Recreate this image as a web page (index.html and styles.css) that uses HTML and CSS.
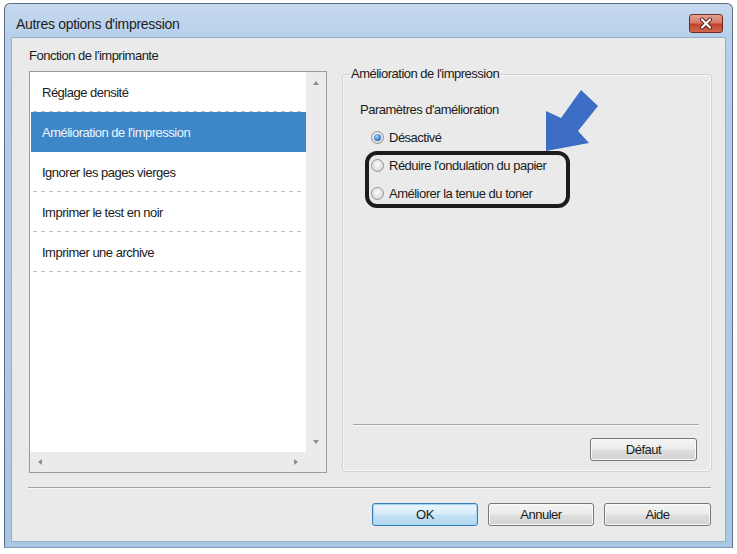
FILE: index.html
```html
<!DOCTYPE html>
<html lang="fr">
<head>
<meta charset="utf-8">
<title>Autres options d'impression</title>
<link rel="stylesheet" href="styles.css">
</head>
<body>
<div class="window">
  <div class="titlebar">
    <span class="title">Autres options d'impression</span>
    <div class="close">
      <svg width="34" height="19" viewBox="0 0 34 19">
        <path d="M13 5.5 L21 13.5 M21 5.5 L13 13.5" stroke="#5a1a12" stroke-width="4" stroke-linecap="round"/>
        <path d="M13 5.5 L21 13.5 M21 5.5 L13 13.5" stroke="#ffffff" stroke-width="2.2" stroke-linecap="round"/>
      </svg>
    </div>
  </div>
  <div class="client">
    <div class="top">
      <div class="leftcol">
        <div class="label">Fonction de l'imprimante</div>
        <div class="listbox">
          <div class="listview">
            <ul class="items">
              <li class="item"><span class="row">Réglage densité</span></li>
              <li class="item selected"><span class="row">Amélioration de l'impression</span></li>
              <li class="item"><span class="row">Ignorer les pages vierges</span></li>
              <li class="item"><span class="row">Imprimer le test en noir</span></li>
              <li class="item"><span class="row">Imprimer une archive</span></li>
            </ul>
          </div>
          <div class="vscroll">
            <span class="tri tri-up"></span>
            <span class="tri tri-down"></span>
          </div>
          <div class="hscroll">
            <span class="tri tri-left"></span>
            <span class="tri tri-right"></span>
          </div>
          <div class="corner"></div>
        </div>
      </div>
      <div class="group">
        <span class="legend">Amélioration de l'impression</span>
        <div class="group-body">
          <div class="sublabel">Paramètres d'amélioration</div>
          <div class="radios">
            <div class="radio-row"><span class="radio on"></span><span>Désactivé</span></div>
            <div class="radio-row"><span class="radio"></span><span>Réduire l'ondulation du papier</span></div>
            <div class="radio-row"><span class="radio"></span><span>Améliorer la tenue du toner</span></div>
          </div>
        </div>
        <div class="group-foot">
          <div class="inner-line"></div>
          <div class="foot-row"><button class="btn btn-defaut">Défaut</button></div>
        </div>
      </div>
    </div>
    <div class="sep"></div>
    <div class="buttons">
      <button class="btn btn-ok">OK</button>
      <button class="btn btn-annuler">Annuler</button>
      <button class="btn btn-aide">Aide</button>
    </div>
  </div>
</div>
<svg class="annot" width="737" height="554" viewBox="0 0 737 554">
  <rect x="367" y="153" width="201" height="53" rx="10" ry="10" fill="none" stroke="#1c1c1c" stroke-width="4"/>
  <polygon points="546,151 546,111 561,118 581,90 598,106 578,131 589,143" fill="#3b6ec4"/>
</svg>
</body>
</html>
```
FILE: styles.css
```css
body {
  margin: 0;
  background: #ffffff;
  font-family: "Liberation Sans", Arial, sans-serif;
  font-size: 13px;
  letter-spacing: -0.5px;
  color: #1b1b1b;
}

.window {
  margin: 3px 4px 0;
  width: 729px;
  height: 545px;
  box-sizing: border-box;
  border: 1px solid #5b6f88;
  border-bottom-color: #7f9ab8;
  border-radius: 6px 6px 0 0;
  background: linear-gradient(#c6daef, #b6cfea 34px, #a9c6e5);
  padding: 0 7px 6px;
  display: flex;
  flex-direction: column;
}

.titlebar {
  height: 34px;
  display: flex;
  align-items: flex-start;
  justify-content: space-between;
}

.title {
  font-size: 14px;
  line-height: 16px;
  letter-spacing: -0.3px;
  margin: 12px 0 0 4px;
  color: #1e1e1e;
}

.close {
  margin: 10px 2px 0 0;
  width: 34px;
  height: 19px;
  box-sizing: border-box;
  border: 1px solid #6e2b22;
  border-radius: 3px;
  background: linear-gradient(#e4a293, #d47a66 45%, #c2432c 55%, #cf6a4f);
  display: flex;
}

.close svg {
  margin: -1px;
}

.client {
  flex: 1;
  background: #eaeaea;
  padding: 10px 13px 15px 17px;
  display: flex;
  flex-direction: column;
  box-shadow: 0 0 0 1px #95b0cd;
}

.top {
  display: flex;
  align-items: flex-start;
  gap: 15px;
}

.leftcol {
  width: 298px;
  display: flex;
  flex-direction: column;
}

.label {
  line-height: 15px;
  margin-bottom: 8px;
}

.listbox {
  height: 402px;
  box-sizing: border-box;
  border: 1px solid #9a9a9a;
  background: #ffffff;
  display: grid;
  grid-template-columns: 1fr 20px;
  grid-template-rows: 1fr 20px;
}

.listview {
  overflow: hidden;
}

.items {
  list-style: none;
  margin: 0;
  padding: 0;
}

.item {
  height: 40px;
  margin-left: 1px;
  padding: 0 2px;
  box-sizing: border-box;
  display: flex;
}

.row {
  flex: 1;
  display: flex;
  align-items: center;
  padding-left: 9px;
  padding-top: 1px;
  background: linear-gradient(to right, #c2c2c2 50%, transparent 50%) left bottom / 8px 1px repeat-x;
}

.item.selected {
  background: #3d87c9;
  color: #eef4fb;
}

.item.selected .row {
  background: none;
}

.vscroll {
  background: #ebebeb;
  display: flex;
  flex-direction: column;
  align-items: center;
  justify-content: space-between;
  padding: 9px 0 8px;
}

.hscroll {
  background: #ebebeb;
  display: flex;
  align-items: center;
  justify-content: space-between;
  padding: 0 8px 0 8px;
}

.corner {
  background: #ebebeb;
}

.tri {
  width: 0;
  height: 0;
  border-style: solid;
  border-color: transparent;
}

.tri-up {
  border-width: 0 3.5px 4px;
  border-bottom-color: #8f8f8f;
}

.tri-down {
  border-width: 4px 3.5px 0;
  border-top-color: #8f8f8f;
}

.tri-left {
  border-width: 3.5px 4px 3.5px 0;
  border-right-color: #8f8f8f;
}

.tri-right {
  border-width: 3.5px 0 3.5px 4px;
  border-left-color: #8f8f8f;
}

.group {
  position: relative;
  margin-top: 26px;
  width: 370px;
  height: 398px;
  box-sizing: border-box;
  border: 1px solid #d3d3d3;
  border-radius: 3px;
  box-shadow: inset 0 0 0 1px #f6f6f6;
  display: flex;
  flex-direction: column;
}

.legend {
  position: absolute;
  top: -9px;
  left: 7px;
  line-height: 15px;
  padding: 0 2px 0 1px;
  background: #eaeaea;
}

.group-body {
  flex: 1;
  padding: 27px 0 0 17px;
}

.sublabel {
  line-height: 15px;
}

.radios {
  margin: 6px 0 0 11px;
}

.radio-row {
  height: 28px;
  display: flex;
  align-items: center;
  gap: 5px;
}

.radio {
  width: 13px;
  height: 13px;
  box-sizing: border-box;
  border-radius: 50%;
  border: 1px solid #939393;
  background: radial-gradient(circle at 50% 40%, #fbfbfb, #dcdcdc 70%, #cfcfcf);
  display: flex;
  align-items: center;
  justify-content: center;
}

.radio.on::after {
  content: "";
  width: 7px;
  height: 7px;
  border-radius: 50%;
  background: radial-gradient(circle at 40% 35%, #a4d6fa, #3d85cf 55%, #1b4f8c);
}

.group-foot {
  padding: 0 14px 10px 10px;
}

.inner-line {
  height: 1px;
  background: #a7a7a7;
  margin-right: -2px;
  border-bottom: 1px solid #fbfbfb;
}

.foot-row {
  display: flex;
  justify-content: flex-end;
  margin-top: 12px;
}

.btn {
  font-family: inherit;
  font-size: 13px;
  letter-spacing: inherit;
  color: #1b1b1b;
  height: 23px;
  box-sizing: border-box;
  border: 1px solid #777777;
  border-radius: 3px;
  background: linear-gradient(#f4f4f4, #ececec 48%, #dedede 52%, #d3d3d3);
  box-shadow: inset 0 0 0 1px #fafafa;
  padding: 0;
  margin: 0;
}

.btn-defaut {
  width: 107px;
}

.sep {
  height: 1px;
  background: #a3a3a3;
  margin: 14px 1px 0 -1px;
  border-bottom: 1px solid #f7f7f7;
}

.buttons {
  display: flex;
  justify-content: flex-end;
  gap: 10px;
  margin: 14px 1px 0 0;
}

.btn-ok {
  width: 106px;
  border-color: #3a7fb4;
  background: linear-gradient(#eaf5fc, #d8ecf9 48%, #c3e0f5 52%, #b6d7f0);
  box-shadow: inset 0 0 0 1px #9fd8f6;
}

.btn-annuler {
  width: 106px;
}

.btn-aide {
  width: 107px;
}

.annot {
  position: absolute;
  top: 0;
  left: 0;
  pointer-events: none;
}
```
